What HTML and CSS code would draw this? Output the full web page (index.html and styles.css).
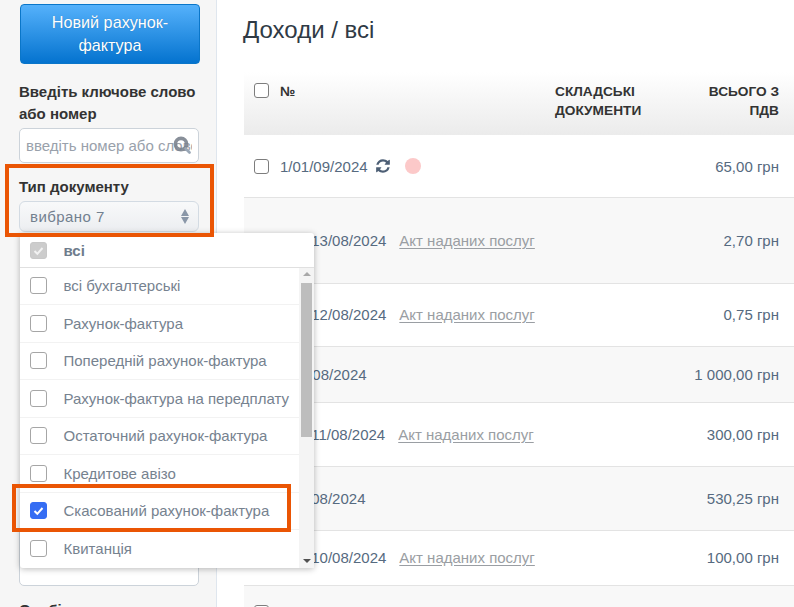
FILE: index.html
```html
<!DOCTYPE html>
<html lang="uk">
<head>
<meta charset="utf-8">
<title>Доходи</title>
<link rel="stylesheet" href="styles.css">
</head>
<body>
<div class="page">
  <aside class="sidebar">
    <button class="new-btn">Новий рахунок-фактура</button>
    <label class="field-label first">Введіть ключове слово або номер</label>
    <div class="search">
      <span class="search-text">введіть номер або слово</span>
      <svg class="search-icon" viewBox="0 0 18 18" width="18" height="18"><circle cx="8" cy="8" r="5.6" fill="none" stroke="#7b838e" stroke-width="3.6" opacity=".9"/><path d="M12.5 12.5l4 4" stroke="#9aa7b6" stroke-width="2.6" stroke-linecap="round"/></svg>
    </div>
    <label class="field-label type">Тип документу</label>
    <div class="select">
      <span>вибрано 7</span>
      <svg class="updown" viewBox="0 0 8 15" width="8" height="15"><path d="M4 0l4 7H0zM4 15l4-7H0z" fill="#8a97a8"/></svg>
    </div>
    <div class="under-input"></div>
    <label class="field-label status">Особі</label>
  </aside>

  <main class="main">
    <h1 class="title">Доходи / всі</h1>
    <div class="table">
      <div class="row head">
        <div class="c-check"><span class="cb"></span></div>
        <div class="c-num">№</div>
        <div class="c-docs">СКЛАДСЬКІ ДОКУМЕНТИ</div>
        <div class="c-sum">ВСЬОГО З ПДВ</div>
      </div>
      <div class="row r63">
        <div class="c-check"><span class="cb"></span></div>
        <div class="c-num">1/01/09/2024
          <svg class="sync" viewBox="0 0 1792 1792" width="16" height="16"><path d="M1639 1056q0 5-1 7-64 268-268 434.5t-478 166.5q-146 0-282.5-55t-243.5-157l-129 129q-19 19-45 19t-45-19-19-45v-448q0-26 19-45t45-19h448q26 0 45 19t19 45-19 45l-137 137q71 66 161 102t187 36q134 0 250-65t186-179q11-17 53-117 8-23 30-23h192q13 0 22.5 9.5t9.5 22.5zm25-800v448q0 26-19 45t-45 19h-448q-26 0-45-19t-19-45 19-45l138-138q-148-137-349-137-134 0-250 65t-186 179q-11 17-53 117-8 23-30 23h-199q-13 0-22.5-9.5t-9.5-22.5v-7q65-268 270-434.5t480-166.5q146 0 284 55.5t245 156.5l130-129q19-19 45-19t45 19 19 45z" fill="#4d5f75"/></svg>
          <span class="dot"></span>
        </div>
        <div class="c-sum">65,00 грн</div>
      </div>
      <div class="row r86 alt">
        <div class="c-check"><span class="cb"></span></div>
        <div class="c-num tight">11/1/13/08/2024<a class="link">Акт наданих послуг</a></div>
        <div class="c-sum">2,70 грн</div>
      </div>
      <div class="row r63 raised">
        <div class="c-check"><span class="cb"></span></div>
        <div class="c-num tight">11/1/12/08/2024<a class="link">Акт наданих послуг</a></div>
        <div class="c-sum">0,75 грн</div>
      </div>
      <div class="row r56 alt">
        <div class="c-check"><span class="cb"></span></div>
        <div class="c-num tight">1/12/08/2024</div>
        <div class="c-sum">1 000,00 грн</div>
      </div>
      <div class="row r64">
        <div class="c-check"><span class="cb"></span></div>
        <div class="c-num tight">11/1/11/08/2024<a class="link">Акт наданих послуг</a></div>
        <div class="c-sum">300,00 грн</div>
      </div>
      <div class="row r64 alt">
        <div class="c-check"><span class="cb"></span></div>
        <div class="c-num tight">1/11/08/2024</div>
        <div class="c-sum">530,25 грн</div>
      </div>
      <div class="row r55 raised">
        <div class="c-check"><span class="cb"></span></div>
        <div class="c-num tight">11/1/10/08/2024<a class="link">Акт наданих послуг</a></div>
        <div class="c-sum">100,00 грн</div>
      </div>
      <div class="row r55 alt">
        <div class="c-check top"><span class="cb"></span></div>
      </div>
    </div>
  </main>

  <div class="dropdown">
    <div class="dd-head">
      <span class="cb cb-disabled"><svg viewBox="0 0 17 17" width="17" height="17"><path d="M4.5 9l2.8 2.8L12.5 6" fill="none" stroke="#f2f2f2" stroke-width="2"/></svg></span>
      <span class="dd-all">всі</span>
    </div>
    <div class="dd-body">
      <ul class="dd-list">
        <li><span class="cb"></span>всі бухгалтерські</li>
        <li><span class="cb"></span>Рахунок-фактура</li>
        <li><span class="cb"></span>Попередній рахунок-фактура</li>
        <li><span class="cb"></span>Рахунок-фактура на передплату</li>
        <li><span class="cb"></span>Остаточний рахунок-фактура</li>
        <li><span class="cb"></span>Кредитове авізо</li>
        <li><span class="cb cb-on"><svg viewBox="0 0 17 17" width="17" height="17"><path d="M4.5 9l2.8 2.8L12.5 6" fill="none" stroke="#fff" stroke-width="2"/></svg></span>Скасований рахунок-фактура</li>
        <li><span class="cb"></span>Квитанція</li>
      </ul>
      <div class="scrollbar">
        <span class="arrow up"></span>
        <span class="thumb"></span>
        <span class="arrow down"></span>
      </div>
    </div>
  </div>

  <div class="mark mark-type"></div>
  <div class="mark mark-item"></div>
</div>
</body>
</html>
```
FILE: styles.css
```css
* { box-sizing: border-box; }
html, body { margin: 0; padding: 0; }
body {
  width: 794px;
  height: 607px;
  overflow: hidden;
  background: #fff;
  font-family: "Liberation Sans", Arial, sans-serif;
  color: #333;
}
.page { position: relative; display: flex; width: 794px; height: 607px; overflow: hidden; }

.sidebar {
  flex: 0 0 217px;
  height: 607px;
  overflow: hidden;
  background: #f6f6f6;
  border-right: 1px solid #dfe6ee;
  padding: 4px 17px 0 19px;
}
.new-btn {
  display: block;
  width: 180px;
  height: 60px;
  margin: 0 0 0 1px;
  padding: 0 12px;
  border: 1px solid #0a76c9;
  border-radius: 4px;
  background: linear-gradient(#55b1fb, #0473cf);
  color: #fff;
  font: 16.2px/23px "Liberation Sans", Arial, sans-serif;
  text-shadow: 0 0 1px rgba(0,0,0,.25);
}
.field-label { display: block; font-weight: bold; font-size: 15px; line-height: 22px; color: #333; }
.field-label.first { margin-top: 17px; }
.search {
  position: relative;
  width: 180px;
  height: 35px;
  margin-top: 3px;
  padding: 0 6px;
  background: #fff;
  border: 1px solid #ccd3da;
  border-radius: 5px;
  font-size: 15px;
  line-height: 34px;
  color: #99a1ab;
  overflow: hidden;
}
.search-text { display: block; width: 166px; overflow: hidden; white-space: nowrap; }
.search-icon { position: absolute; right: 7px; top: 7px; }
.field-label.type { margin-top: 13px; }
.select {
  display: flex;
  align-items: center;
  justify-content: space-between;
  width: 180px;
  height: 31px;
  margin-top: 3px;
  padding: 0 9px 0 10px;
  border: 1px solid #d3dbe3;
  border-radius: 6px;
  background: linear-gradient(#f8f9fa, #eceef1);
  font-size: 15px;
  letter-spacing: .45px;
  color: #72808f;
}
.under-input {
  width: 180px;
  height: 60px;
  margin-top: 294px;
  background: #fff;
  border: 1px solid #ccd3da;
  border-radius: 5px;
}
.field-label.status { margin-top: 13px; }

.main { flex: 1; min-width: 0; padding-left: 26px; }
.title { margin: 0; padding-top: 15px; height: 72px; font-size: 24px; line-height: 29px; font-weight: normal; color: #2f3a45; }
.table { margin-left: 1px; }
.row {
  display: flex;
  align-items: center;
  border-bottom: 1px solid #e3e3e3;
  font-size: 15px;
  color: #566a80;
}
.row.alt { background: #f8f8f8; }
.row.raised { padding-bottom: 1px; }
.r63 { height: 63px; }
.r86 { height: 86px; }
.r56 { height: 56px; }
.r64 { height: 64px; }
.r55 { height: 55px; }
.head {
  height: 63px;
  align-items: flex-start;
  padding-top: 10px;
  border-bottom: 0;
  background: linear-gradient(#fff, #ebebeb);
  font-size: 13.7px;
  line-height: 19px;
  font-weight: bold;
  color: #333;
}
.c-check { flex: 0 0 36px; padding-left: 10px; display: flex; }
.head .c-check { padding-top: 1px; }
.c-num { flex: 1; white-space: nowrap; display: flex; align-items: center; }
.c-num.tight { margin-left: -1px; }
.head .c-num { flex: 0 0 275px; }
.c-docs { flex: 0 0 100px; }
.c-sum { margin-left: auto; padding-right: 15px; text-align: right; white-space: nowrap; }
.head .c-sum { width: 110px; white-space: normal; }
.link { margin-left: 13px; color: #9a9ea3; text-decoration: underline; text-underline-offset: 2px; }
.c-check.top { align-self: flex-start; padding-top: 19px; }
.cb {
  display: inline-block;
  flex: none;
  width: 15px;
  height: 15px;
  background: #fff;
  border: 1px solid #7d7d7d;
  border-radius: 3px;
}
.sync { margin-left: 7px; }
.dot { width: 16px; height: 16px; margin-left: 14px; border-radius: 50%; background: #fcc9c9; }

.dropdown {
  position: absolute;
  left: 20px;
  top: 233px;
  width: 294px;
  height: 335px;
  background: #fff;
  border-radius: 3px;
  box-shadow: 0 1px 6px rgba(0,0,0,.28);
}
.dd-head {
  display: flex;
  align-items: center;
  height: 35px;
  padding-left: 10px;
  border-bottom: 1px solid #e0e0e0;
}
.dropdown .cb { width: 17px; height: 17px; border-color: #a6a6a6; }
.dd-all { margin-left: 16.5px; font-size: 15px; font-weight: bold; color: #6e7c8c; }
.dropdown .cb-disabled { background: #cccccc; border-color: #c8c8c8; }
.cb-disabled svg, .cb-on svg { display: block; margin: -1px; }
.dropdown .cb-on { background: #356df3; border-color: #356df3; }
.dd-body { display: flex; height: 300px; margin-top: -0.5px; }
.dd-list { flex: 0 0 279px; margin: 0; padding: 0; list-style: none; }
.dd-list li {
  display: flex;
  align-items: center;
  height: 37.5px;
  padding-left: 10px;
  border-bottom: 1px solid #f2f2f2;
  font-size: 15px;
  color: #76828f;
  white-space: nowrap;
}
.dd-list li:last-child { border-bottom: 0; }
.dd-list .cb { margin-right: 16.5px; }
.scrollbar {
  position: relative;
  flex: 0 0 15px;
  background: #f4f4f4;
}
.thumb { position: absolute; left: 2px; top: 15px; width: 11px; height: 154px; background: #bdbdbd; }
.arrow { position: absolute; left: 3.5px; width: 0; height: 0; border-left: 4px solid transparent; border-right: 4px solid transparent; }
.arrow.up { top: 4px; border-bottom: 4px solid #a8a8a8; }
.arrow.down { bottom: 5px; border-top: 4px solid #505050; }

.mark { position: absolute; border: 4px solid #ea5504; pointer-events: none; }
.mark-type { left: 5px; top: 164px; width: 209px; height: 73px; }
.mark-item { left: 12px; top: 484px; width: 279px; height: 48px; }
```
